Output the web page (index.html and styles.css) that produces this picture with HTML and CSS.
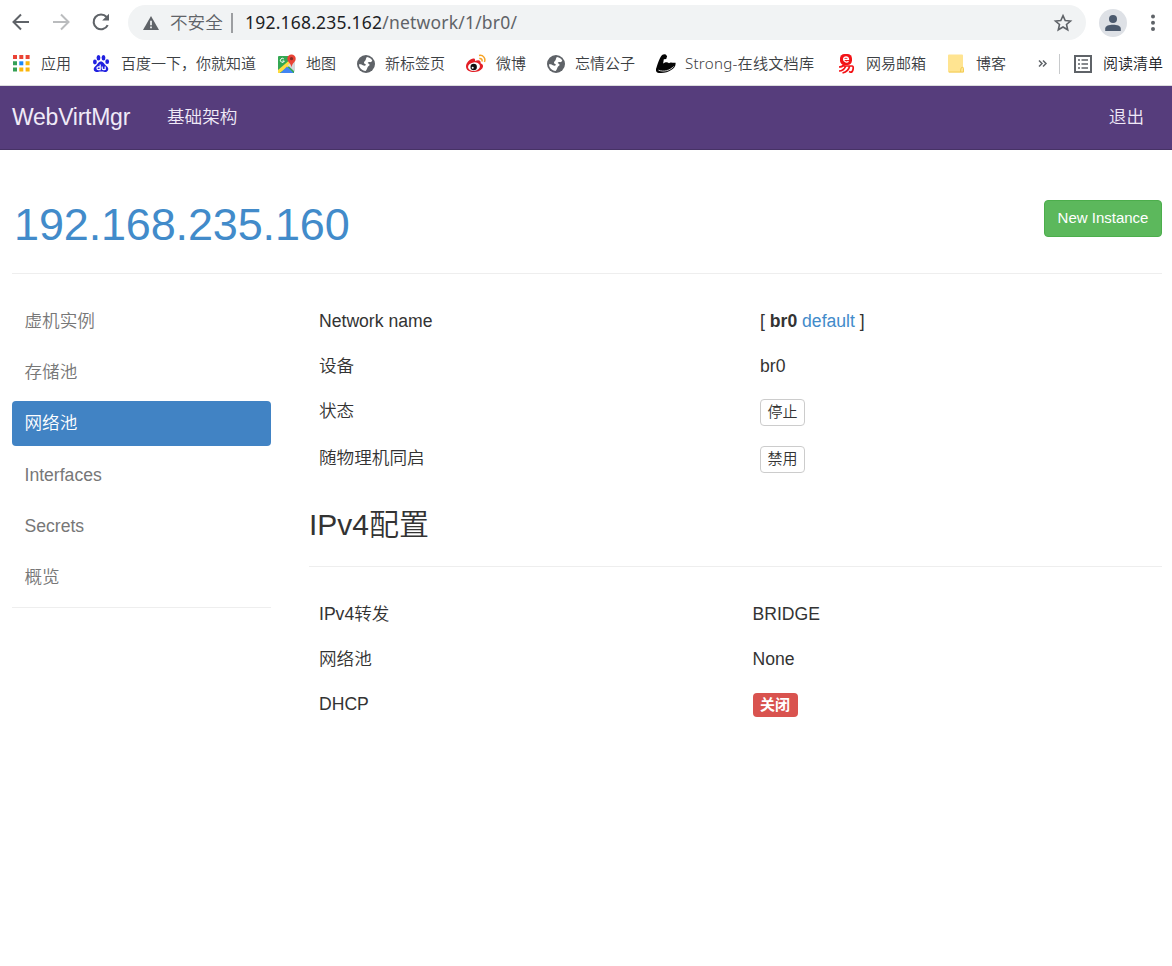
FILE: index.html
```html
<!DOCTYPE html>
<html lang="zh-CN">
<head>
<meta charset="utf-8">
<title>WebVirtMgr</title>
<link rel="stylesheet" href="styles.css">
</head>
<body>
<svg width="0" height="0" class="defs" aria-hidden="true">
  <symbol id="globe" viewBox="0 0 18 18">
    <circle cx="9" cy="9" r="9" fill="#5f6368"/>
    <path d="M10 2.100C12.500 2.400 14.400 3.800 15.300 5.800C14.500 7 13.700 7.400 12.800 7.100C11.800 6.700 11.200 7.500 10.600 8.100C11.600 8.700 12.700 9 12.500 10.100C12.300 11.200 11.100 11.100 10.600 12.200C10.200 13.400 9.800 14.400 8.600 15.900C4.800 15.700 2 12.700 2 9.300C3.500 9 5 9.600 6 10.300C6.900 10.900 8.500 10.800 8.800 9.900C9 9 7.500 9.200 7.100 8.300C6.700 7.200 7.400 6.400 8.200 5.700C9.200 4.700 8.700 3.100 10 2.100Z" fill="#fff"/>
  </symbol>
</svg>
<header class="chrome">
  <div class="toolbar">
    <svg class="nav-icon" viewBox="0 0 20 20"><path d="M18 10H3M10 2.500L2.500 10L10 17.500" fill="none" stroke="#5f6368" stroke-width="2"/></svg>
    <svg class="nav-icon" viewBox="0 0 20 20"><path d="M2 10H17M10 2.500L17.500 10L10 17.500" fill="none" stroke="#babcbe" stroke-width="2"/></svg>
    <svg class="nav-icon" viewBox="0 0 20 20"><path d="M16.700 13.100A7.400 7.400 0 1 1 15.600 5" fill="none" stroke="#5f6368" stroke-width="2.100"/><path d="M18 1.800V8.600H11.200Z" fill="#5f6368"/></svg>
    <div class="omnibox">
      <svg class="warn" viewBox="0 0 16 14"><path d="M8 0L16 14H0Z" fill="#5f6368"/><path d="M8 4.800V9.200M8 10.500V12.200" stroke="#f1f3f4" stroke-width="1.700"/></svg>
      <span class="insecure">不安全</span><span class="sep"></span>
      <span class="url">192.168.235.162<span class="path">/network/1/br0/</span></span>
      <svg class="star" viewBox="0 0 20 20"><path d="M10 2.600L12.200 7.500L17.500 8L13.500 11.500L14.700 16.800L10 14L5.300 16.800L6.500 11.500L2.500 8L7.800 7.500Z" fill="none" stroke="#5f6368" stroke-width="1.600"/></svg>
    </div>
    <svg class="avatar" viewBox="0 0 28 28"><circle cx="14" cy="14" r="14" fill="#dee1e6"/><circle cx="14" cy="10" r="4" fill="#4c5a6e"/><path d="M6.200 22V19.700C6.200 16.800 10 15.800 14 15.800S21.800 16.800 21.800 19.700V22Z" fill="#4c5a6e"/></svg>
    <svg class="dots" viewBox="0 0 6 18"><g fill="#5f6368"><circle cx="3" cy="2.500" r="2"/><circle cx="3" cy="8.800" r="2"/><circle cx="3" cy="15" r="2"/></g></svg>
  </div>
  <div class="bookmarks">
    <div class="bm"><svg class="icon" viewBox="0 0 20 20"><path fill="#ea4335" d="M1 1h4v4H1zM7.300 1h4v4h-4zM13.600 1h4v4h-4z"/><path fill="#34a057" d="M1 7.300h4v4H1zM1 13.600h4v4H1z"/><path fill="#1e88f5" d="M7.300 7.300h4v4h-4z"/><path fill="#fbb60b" d="M13.600 7.300h4v4h-4zM7.300 13.600h4v4h-4zM13.600 13.600h4v4h-4z"/></svg><span>应用</span></div>
    <div class="bm"><svg class="icon" viewBox="0 0 20 20"><g fill="#2020e0"><ellipse cx="2.900" cy="8" rx="1.900" ry="2.400"/><ellipse cx="6.500" cy="3.700" rx="1.900" ry="2.700"/><ellipse cx="11.500" cy="3.700" rx="1.900" ry="2.700"/><ellipse cx="15.200" cy="7.700" rx="1.900" ry="2.400"/><path d="M9 7.500C11.500 7.500 12 10.200 14.500 12C18 14.800 15.800 18.400 12.600 18C10 17.400 8 17.500 6 18C2.400 18.600 0 15 3.300 12.200C5.700 10.300 6.200 7.500 9 7.500Z"/></g><path d="M8.200 10.500V15.700H6.400C4.600 15.700 4.500 12.800 6.400 12.800H8M10.200 12.500V14.500C10.200 15.800 13.200 16.200 13.200 14.500V12.500V16" fill="none" stroke="#fff" stroke-width="1.200"/></svg><span>百度一下，你就知道</span></div>
    <div class="bm"><svg class="icon" viewBox="0 0 20 20"><path d="M2 2H17V19H2Q1 19 1 18V3Q1 2 2 2Z" fill="#34a853"/><path d="M1 16L15 4L18 8L2.500 19H1Z" fill="#ffdc3f"/><path d="M10.500 11L18 18V7Z" fill="#d6d8dc"/><path d="M3.500 19L10 12.500L16.500 19Z" fill="#4285f4"/><path d="M6.800 4.900A2 2 0 1 0 7.300 7H5.500" fill="none" stroke="#fff" stroke-width="1"/><path d="M14.500 0.500A4.200 4.200 0 0 0 10.300 4.700C10.300 8.200 14 8.700 14.500 13.500C15 8.700 18.700 8.200 18.700 4.700A4.200 4.200 0 0 0 14.500.5Z" fill="#ea4335"/><circle cx="14.500" cy="4.700" r="1.600" fill="#842b24"/></svg><span>地图</span></div>
    <div class="bm"><svg class="icon globe"><use href="#globe"/></svg><span>新标签页</span></div>
    <div class="bm"><svg class="icon weibo" viewBox="0 0 20 20"><path d="M0 12.500C0 8 5.500 3.500 8.300 4.600C9.500 5.200 9 7 9 7C12 5.500 15.300 6 14.600 9.200C17.400 10.200 17.600 12.400 16.200 14.600C12 20 0 19 0 12.500Z" fill="#e31f26"/><ellipse cx="8" cy="12.700" rx="6" ry="4.300" fill="#fff" transform="rotate(-8 8 12.700)"/><circle cx="7.700" cy="13" r="3.200" fill="#111"/><circle cx="6.700" cy="13.800" r="1" fill="#fff"/><path d="M13 1.500C17.200.6 20 4.500 18.400 8M13.300 4.500C15.600 4.200 16.500 5.800 15.900 7.400" fill="none" stroke="#f6a426" stroke-width="1.500"/></svg><span>微博</span></div>
    <div class="bm"><svg class="icon globe"><use href="#globe"/></svg><span>忘情公子</span></div>
    <div class="bm"><svg class="icon" viewBox="0 0 20 20"><path d="M6.500.8Q8-.4 9.800.6L11.100 2.200L10.200 4.900L7.800 5.200L7.100 9.700C8.500 8 11.500 7.600 13 9.200C14.500 7.800 17 9.200 19.500 8.800C20.700 14 12 20 3 19C-.5 18.700-.5 16 .5 13.500C1.800 10 3.500 3.300 6.500.8Z" fill="#050505"/><path d="M2.500 16.200C8 18.300 14 16.500 17.600 12.500" fill="none" stroke="#fff" stroke-width=".8"/></svg><span class="latin">Strong-在线文档库</span></div>
    <div class="bm"><svg class="icon" viewBox="0 0 20 20"><rect x="3" y="0" width="12" height="11" rx="4.500" fill="#f31216"/><path d="M6.600 5.300H11.500C11.500 2.200 6.600 2.200 6.600 5.300C6.600 8.500 10.300 8.500 11.500 7.200" fill="none" stroke="#fff" stroke-width="1.300"/><path d="M2 13C5 13 6.500 11.500 7 10.500M5 12H15.300C17 12 16.300 18.500 13.500 18.200L12 17.500M2 17C5 17 7.500 15 8.800 12M5.500 19C9.500 18 12 15.500 12.600 12" fill="none" stroke="#f31216" stroke-width="1.700"/></svg><span>网易邮箱</span></div>
    <div class="bm"><svg class="icon" viewBox="0 0 20 20"><path d="M2 .5H15Q16 .5 16 1.500V12.500Q17.500 14 16.500 18.500H2Q1 18.500 1 17.500V1.500Q1 .5 2 .5Z" fill="#ffe491"/><path d="M2 18H16.500V14.500Q16 12.500 14.500 13.500Q13.500 14.500 13.500 18" fill="none" stroke="#f2cc55" stroke-width="1"/></svg><span>博客</span></div>
    <svg class="more" viewBox="0 0 10 10"><path d="M1 1.500L4 4.500L1 7.500M5 1.500L8 4.500L5 7.500" fill="none" stroke="#5f6368" stroke-width="1.500"/></svg>
    <div class="reading"><svg class="list-icon" viewBox="0 0 18 18"><rect x="1" y="1" width="16" height="16" fill="none" stroke="#5f6368" stroke-width="2"/><path d="M4 5h2M4 9h2M4 13h2M7.500 5H14M7.500 9H14M7.500 13H14" stroke="#5f6368" stroke-width="1.600"/></svg><span>阅读清单</span></div>
  </div>
</header>
<nav class="navbar">
  <a class="brand">WebVirtMgr</a><a class="link">基础架构</a><a class="logout">退出</a>
</nav>
<main class="container">
  <div class="page-header"><h1>192.168.235.160</h1><a class="new-instance">New Instance</a></div>
  <div class="columns">
    <ul class="side">
      <li>虚机实例</li><li>存储池</li><li class="active">网络池</li><li>Interfaces</li><li>Secrets</li><li>概览</li>
    </ul>
    <section class="content">
      <dl class="info">
        <dt>Network name</dt><dd>[ <b>br0</b> <a class="other">default</a> ]</dd>
        <dt>设备</dt><dd>br0</dd>
        <dt class="tall">状态</dt><dd class="tall"><button class="small-btn">停止</button></dd>
        <dt class="tall">随物理机同启</dt><dd class="tall"><button class="small-btn">禁用</button></dd>
      </dl>
      <h3>IPv4配置</h3>
      <dl class="info ipv4">
        <dt>IPv4转发</dt><dd>BRIDGE</dd>
        <dt>网络池</dt><dd>None</dd>
        <dt>DHCP</dt><dd><span class="label">关闭</span></dd>
      </dl>
    </section>
  </div>
</main>
</body>
</html>
```
FILE: styles.css
```css
* { box-sizing: border-box; }
body {
  margin: 0;
  background: #fff;
  color: #333;
  font: 350 17.6px/25px "Liberation Sans", "Noto Sans CJK SC", sans-serif;
}
b { font-weight: 700; }
svg { display: block; flex: none; }
.defs { display: none; }
.chrome {
  height: 86px;
  border-bottom: 1px solid #dcdcde;
  font-family: "Noto Sans", "Noto Sans CJK SC", sans-serif;
}
.toolbar { height: 45px; display: flex; align-items: center; padding-left: 10px; }
.nav-icon { width: 20px; height: 20px; margin-right: 20px; position: relative; left: 1px; top: -1px; }
.omnibox {
  width: 958px;
  height: 35px;
  margin-left: -2px;
  padding: 0 13px 0 15px;
  border-radius: 18px;
  background: #f1f3f4;
  display: flex;
  align-items: center;
}
.warn { width: 16px; height: 14px; margin-right: 11px; }
.insecure { width: 54px; font-size: 17.6px; color: #5f6368; white-space: nowrap; }
.sep { width: 2px; height: 20px; margin: 0 12px 0 7px; background: #9c9ea1; }
.url { font-size: 17.5px; font-weight: 400; letter-spacing: 0.2px; line-height: 24px; color: #202124; white-space: nowrap; padding-bottom: 1px; }
.path { color: #5f6368; }
.star { width: 20px; height: 20px; margin-left: auto; }
.avatar { width: 28px; height: 28px; margin: 0 0 0 13px; }
.dots { width: 6px; height: 18px; margin-left: 23px; }
.bookmarks {
  height: 37px;
  padding-left: 12px;
  display: grid;
  grid-template-columns: 80px 185px 80px 110px 80px 109px 181px 110px 90px 21px 1fr;
  align-items: center;
  font-size: 15px;
  line-height: 20px;
  color: #3c4043;
  white-space: nowrap;
}
.bm { display: flex; align-items: center; gap: 9px; }
.bm span, .reading span { padding-bottom: 1px; }
.icon { width: 20px; height: 20px; }
.icon.globe { width: 18px; height: 18px; margin-right: 1px; }
.weibo { margin-left: -1px; margin-right: 1px; }
.latin { font-size: 15.1px; letter-spacing: 0.25px; }
.more { width: 10px; height: 10px; margin-left: 1px; }
.reading {
  height: 20px;
  margin-left: 1px;
  padding-left: 14px;
  border-left: 1px solid #c8cacc;
  display: flex;
  align-items: center;
  gap: 11px;
  color: #202124;
}
.list-icon { width: 18px; height: 18px; }
.navbar {
  height: 64px;
  padding: 0 28px 1px 12px;
  border-bottom: 1px solid #463265;
  background: #563d7c;
  color: #f0eaf7;
  display: flex;
  align-items: center;
}
.brand { width: 155px; font-size: 23px; letter-spacing: -0.25px; }
.logout { margin-left: auto; }
.container { padding: 50px 10px 0 12px; }
.page-header {
  height: 74px;
  border-bottom: 1px solid #eee;
  display: flex;
  justify-content: space-between;
  align-items: flex-start;
}
h1 { margin: 0; font-size: 45px; font-weight: 400; line-height: 50px; letter-spacing: -0.15px; color: #428bca; padding-left: 2px; }
.new-instance {
  width: 118px;
  height: 37px;
  border: 1px solid #4cae4c;
  border-radius: 4px;
  background: #5cb85c;
  color: #fff;
  font-size: 15px;
  line-height: 33px;
  text-align: center;
}
.columns { display: grid; grid-template-columns: 259px 1fr; column-gap: 38px; padding-top: 25px; }
.side {
  height: 309px;
  margin: 0;
  padding: 0;
  list-style: none;
  border-bottom: 1px solid #eee;
  display: flex;
  flex-direction: column;
  gap: 6.200px;
}
.side li { height: 45px; padding: 10px 12.5px; color: #777; }
.side .active { background: #4183c4; color: #fff; border-radius: 4px; }
.info {
  margin: 0;
  padding: 0 10px;
  display: grid;
  grid-template-columns: 441px 1fr;
}
dt, dd { margin: 0; height: 45px; padding-top: 10px; }
.tall { height: 47px; }
.other { color: #428bca; }
.small-btn {
  display: block;
  width: 45px;
  height: 27px;
  margin: 0;
  padding: 0 0 2px;
  border: 1px solid #ccc;
  border-radius: 4px;
  background: #fff;
  color: #333;
  font: 350 15px/23px "Liberation Sans", "Noto Sans CJK SC", sans-serif;
}
h3 {
  margin: 0 0 25px;
  height: 84px;
  padding-top: 25px;
  border-bottom: 1px solid #eee;
  font-size: 30px;
  line-height: 33px;
  font-weight: 350;
}
.ipv4 { grid-template-columns: 433.500px 1fr; }
.label {
  display: block;
  width: 45px;
  height: 24px;
  margin-top: 1px;
  border-radius: 4px;
  background: #d9534f;
  color: #fff;
  font-size: 15px;
  font-weight: 700;
  line-height: 23px;
  text-align: center;
}
```
